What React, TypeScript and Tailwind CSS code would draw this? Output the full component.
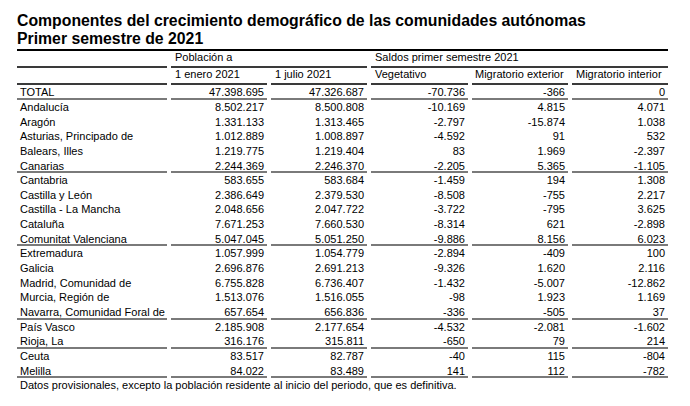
import React from "react";

type Row = [string, string, string, string, string, string, boolean];

const rows: Row[] = [
  ["Andalucía", "8.502.217", "8.500.808", "-10.169", "4.815", "4.071", false],
  ["Aragón", "1.331.133", "1.313.465", "-2.797", "-15.874", "1.038", false],
  ["Asturias, Principado de", "1.012.889", "1.008.897", "-4.592", "91", "532", false],
  ["Balears, Illes", "1.219.775", "1.219.404", "83", "1.969", "-2.397", false],
  ["Canarias", "2.244.369", "2.246.370", "-2.205", "5.365", "-1.105", true],
  ["Cantabria", "583.655", "583.684", "-1.459", "194", "1.308", false],
  ["Castilla y León", "2.386.649", "2.379.530", "-8.508", "-755", "2.217", false],
  ["Castilla - La Mancha", "2.048.656", "2.047.722", "-3.722", "-795", "3.625", false],
  ["Cataluña", "7.671.253", "7.660.530", "-8.314", "621", "-2.898", false],
  ["Comunitat Valenciana", "5.047.045", "5.051.250", "-9.886", "8.156", "6.023", true],
  ["Extremadura", "1.057.999", "1.054.779", "-2.894", "-409", "100", false],
  ["Galicia", "2.696.876", "2.691.213", "-9.326", "1.620", "2.116", false],
  ["Madrid, Comunidad de", "6.755.828", "6.736.407", "-1.432", "-5.007", "-12.862", false],
  ["Murcia, Región de", "1.513.076", "1.516.055", "-98", "1.923", "1.169", false],
  ["Navarra, Comunidad Foral de", "657.654", "656.836", "-336", "-505", "37", true],
  ["País Vasco", "2.185.908", "2.177.654", "-4.532", "-2.081", "-1.602", false],
  ["Rioja, La", "316.176", "315.811", "-650", "79", "214", true],
  ["Ceuta", "83.517", "82.787", "-40", "115", "-804", false],
  ["Melilla", "84.022", "83.489", "141", "112", "-782", true],
];

function DataRow({ r }: { r: Row }) {
  const sep = r[6];
  const base = sep
    ? "h-[14.65px] leading-[14.65px] whitespace-nowrap border-b-2 border-[#7a7a7a]"
    : "h-[14.65px] leading-[14.65px] whitespace-nowrap";
  return (
    <>
      <div className={`${base} pl-[3px]`}>{r[0]}</div>
      <div className={`${base} pr-[3px] text-right`}>{r[1]}</div>
      <div className={`${base} pr-[3px] text-right`}>{r[2]}</div>
      <div className={`${base} pr-[3px] text-right`}>{r[3]}</div>
      <div className={`${base} pr-[3px] text-right`}>{r[4]}</div>
      <div className={`${base} pr-[3px] text-right`}>{r[5]}</div>
    </>
  );
}

export default function App() {
  const h1 = "h-[17px] border-b-2 border-[#3a3a3a] leading-[13px] whitespace-nowrap";
  const tot = "h-[15px] border-b-2 border-[#7a7a7a] leading-[14px] whitespace-nowrap";
  return (
    <div className="w-[690px] h-[406px] bg-white text-black font-['Liberation_Sans',Arial,sans-serif] pt-[12px] overflow-hidden">
      <div className="ml-[17px] text-[15.8px] leading-[18px] font-bold whitespace-nowrap">
        <div>Componentes del crecimiento demográfico de las comunidades autónomas</div>
        <div>Primer semestre de 2021</div>
      </div>
      <div className="mt-[1px] ml-[17px] w-[651px] border-t-2 border-black grid grid-cols-[150px_96px_96px_97px_96px_96px] gap-x-[4px] text-[11px]">
        <div className={h1} />
        <div className={`${h1} col-span-2 pl-[4px]`}>Población a</div>
        <div className={`${h1} col-span-3 pl-[4px]`}>Saldos primer semestre 2021</div>

        <div className={h1} />
        <div className={`${h1} pl-[4px]`}>1 enero 2021</div>
        <div className={`${h1} pl-[4px]`}>1 julio 2021</div>
        <div className={`${h1} pl-[4px]`}>Vegetativo</div>
        <div className={`${h1} pl-[3px]`}>Migratorio exterior</div>
        <div className={`${h1} pl-[4px]`}>Migratorio interior</div>

        <div className={`${tot} pl-[3px]`}>TOTAL</div>
        <div className={`${tot} pr-[3px] text-right`}>47.398.695</div>
        <div className={`${tot} pr-[3px] text-right`}>47.326.687</div>
        <div className={`${tot} pr-[3px] text-right`}>-70.736</div>
        <div className={`${tot} pr-[3px] text-right`}>-366</div>
        <div className={`${tot} pr-[3px] text-right`}>0</div>

        {rows.map((r) => (
          <DataRow key={r[0]} r={r} />
        ))}
      </div>
      <div className="ml-[17px] pl-[3px] text-[11px] leading-[14.65px] whitespace-nowrap">
        Datos provisionales, excepto la población residente al inicio del periodo, que es definitiva.
      </div>
    </div>
  );
}
